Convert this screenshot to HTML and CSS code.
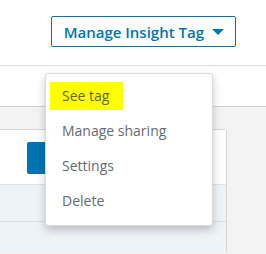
FILE: index.html
```html
<!DOCTYPE html>
<html lang="en">
<head>
    <meta charset="UTF-8">
    <title>Insight Tag</title>
    <link rel="stylesheet" href="styles.css">
</head>
<body>
    <div class="header">
        <button class="manage-btn">Manage Insight Tag <span class="caret"></span></button>
    </div>
    <div class="subbar"></div>
    <div class="main">
        <div class="card">
            <div class="card-top">
                <div class="card-btn"></div>
            </div>
            <div class="card-row"></div>
            <div class="card-row last"></div>
        </div>
    </div>

    <ul class="menu">
        <li><span class="marked">See tag</span></li>
        <li>Manage sharing</li>
        <li>Settings</li>
        <li>Delete</li>
    </ul>
</body>
</html>
```

FILE: styles.css
```css
body {
    margin: 0;
    font-family: "Open Sans", "Noto Sans", sans-serif;
    background-color: #f3f3f3;
    position: relative;
}
.header {
    height: 66px;
    background-color: #fff;
    border-bottom: 1px solid #dcdcdc;
    display: flex;
    justify-content: flex-end;
    align-items: flex-start;
    padding: 16px 30px 0 0;
    box-sizing: border-box;
}
.manage-btn {
    height: 31px;
    padding: 0 11px 0 12px;
    font-family: inherit;
    font-size: 15px;
    font-weight: 600;
    color: #0073b1;
    background-color: #fff;
    border: 1px solid #0073b1;
    border-radius: 2px;
    display: flex;
    align-items: center;
    gap: 8px;
}
.caret {
    width: 0;
    height: 0;
    border-left: 6px solid transparent;
    border-right: 6px solid transparent;
    border-top: 6px solid #0073b1;
}
.subbar {
    height: 40px;
    background-color: #fff;
    border-bottom: 1px solid #cfcfcf;
}
.main {
    padding-top: 22px;
}
.card {
    width: 226px;
    background-color: #eef3f8;
    border: 1px solid #d6d6d6;
    border-left: none;
    border-bottom: none;
    border-radius: 0 3px 0 0;
}
.card-top {
    height: 55px;
    background-color: #fff;
    border-bottom: 1px solid #dde2e6;
    padding: 12px 0 0 27px;
    box-sizing: border-box;
}
.card-btn {
    width: 60px;
    height: 32px;
    background-color: #0073b1;
    border-radius: 2px;
}
.card-row {
    height: 36px;
    border-bottom: 1px solid #d9dde1;
}
.card-row.last {
    height: 30px;
    border-bottom: none;
}
.menu {
    position: absolute;
    left: 45px;
    top: 73px;
    width: 168px;
    margin: 0;
    padding: 4px 0 7px;
    list-style: none;
    background-color: #fff;
    border: 1px solid #dadada;
    border-radius: 3px;
    box-shadow: 0 4px 8px rgba(0, 0, 0, 0.22);
    box-sizing: border-box;
}
.menu li {
    height: 35px;
    line-height: 35px;
    padding-left: 16px;
    font-size: 14px;
    color: #5f6b75;
}
.marked {
    background-color: #ffff00;
    color: #5e6530;
    padding: 4px 14px 5px 12px;
    margin-left: -12px;
}
```
